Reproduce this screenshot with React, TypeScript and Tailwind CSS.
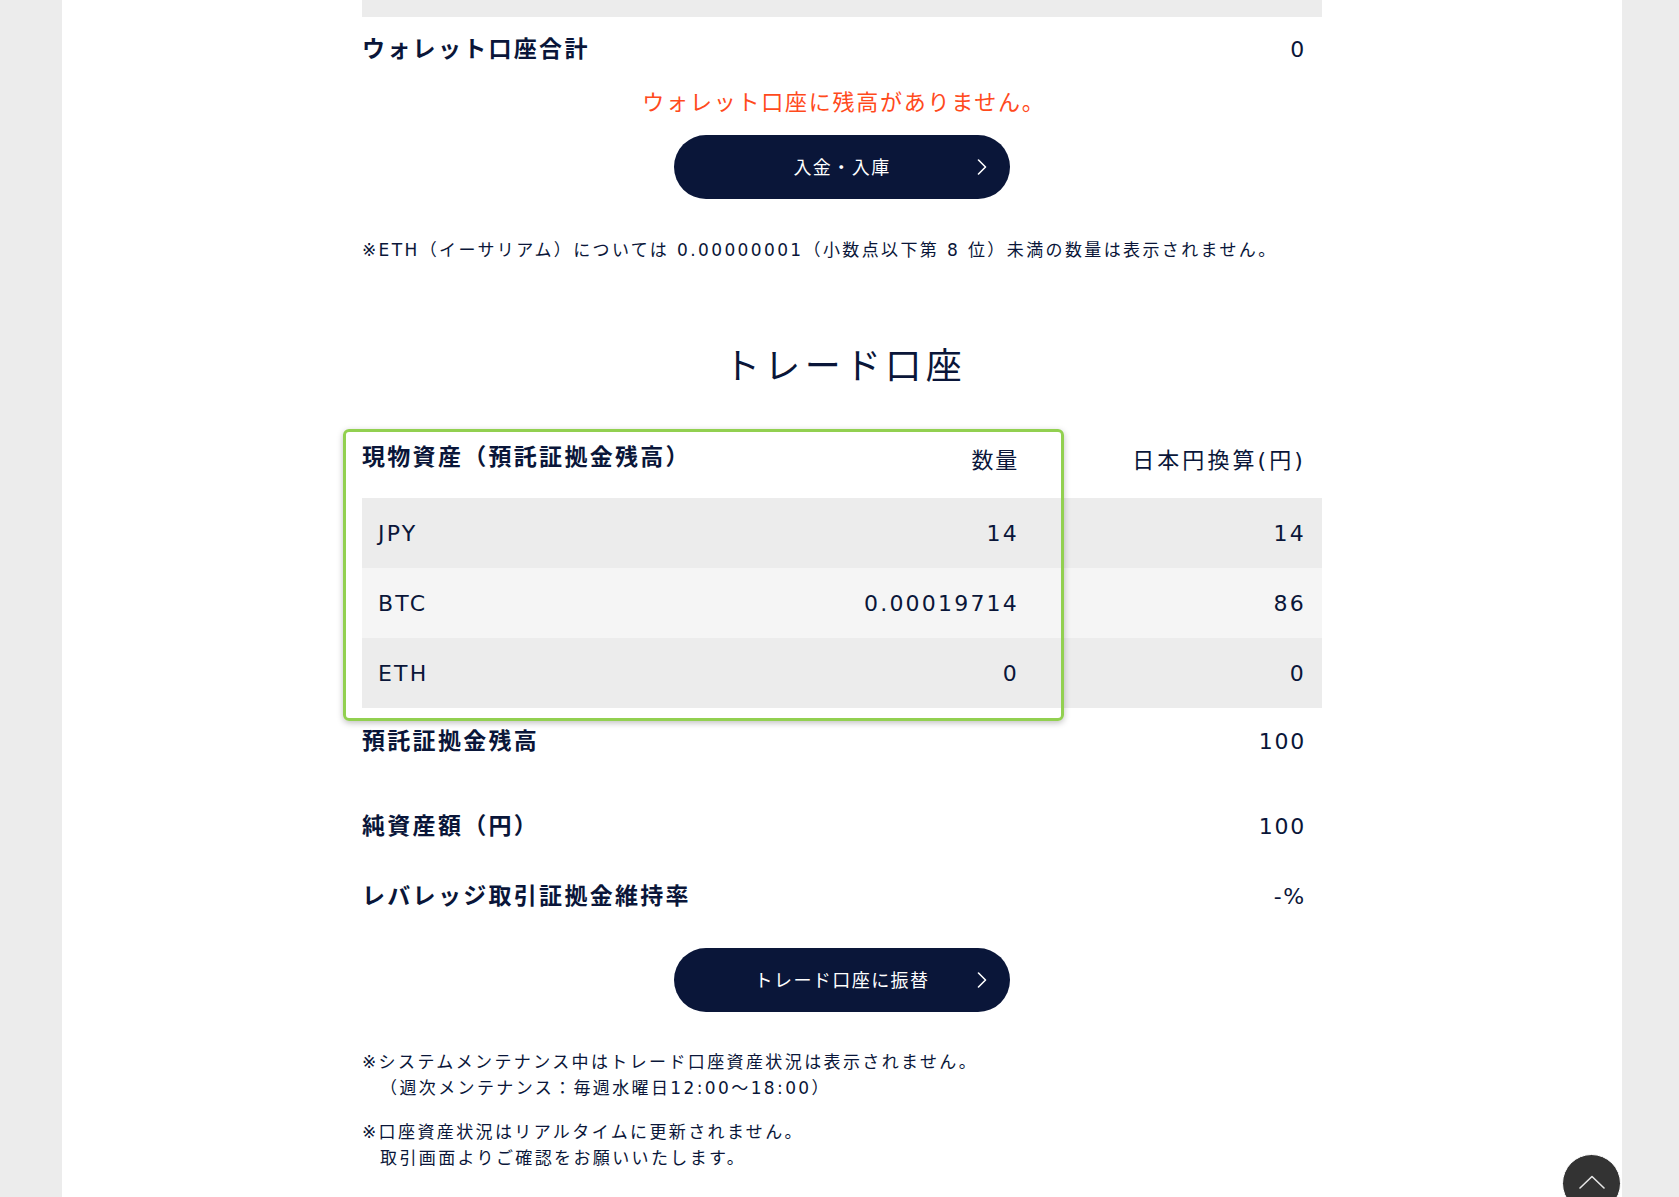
import React from 'react';

const navy = 'text-[#0a1639]';

function Chevron() {
  return (
    <svg width="10" height="16" viewBox="0 0 10 16" fill="none" className="absolute right-[23px] top-1/2 -translate-y-1/2">
      <polyline points="1.5,1 8.5,8 1.5,15" stroke="#ffffff" strokeWidth="1.6" strokeLinecap="round" strokeLinejoin="round" />
    </svg>
  );
}

function PillButton({ label }: { label: string }) {
  return (
    <button className="relative mx-auto flex h-[64px] w-[336px] items-center justify-center rounded-full bg-[#0a1639] text-[18px] tracking-[0.08em] text-white">
      {label}
      <Chevron />
    </button>
  );
}

function SummaryRow({ label, value, className }: { label: string; value: string; className?: string }) {
  return (
    <div className={`flex h-[66px] items-center justify-between pr-[16px] ${className ?? ''}`}>
      <span className="text-[23px] font-bold tracking-[0.1em]">{label}</span>
      <span className="text-[22px] tracking-[0.08em]">{value}</span>
    </div>
  );
}

const assets = [
  { code: 'JPY', qty: '14', jpy: '14', bg: 'bg-[#ececec]' },
  { code: 'BTC', qty: '0.00019714', jpy: '86', bg: 'bg-[#f5f5f5]' },
  { code: 'ETH', qty: '0', jpy: '0', bg: 'bg-[#ececec]' },
];

export default function App() {
  return (
    <div className={`min-h-screen bg-[#ececec] font-[DejaVu_Sans,Noto_Sans_CJK_JP,sans-serif] ${navy}`}>
      <div className="ml-[62px] w-[1560px] bg-white pb-[26px]">
        <div className="mx-auto w-[960px]">
          {/* tail of previous table */}
          <div className="h-[17px] bg-[#ececec]" />

          {/* wallet */}
          <div className="flex h-[64px] items-center justify-between pr-[16px]">
            <span className="text-[23px] font-bold tracking-[0.1em]">ウォレット口座合計</span>
            <span className="text-[22px] tracking-[0.08em]">0</span>
          </div>
          <p className="flex h-[42px] items-center justify-center pl-[4px] text-[22px] tracking-[0.08em] text-[#ff4a1c]">
            ウォレット口座に残高がありません。
          </p>
          <div className="mt-[12px]">
            <PillButton label="入金・入庫" />
          </div>
          <p className="mt-[38px] text-[17px] leading-[26px] tracking-[0.14em]">
            ※ETH（イーサリアム）については 0.00000001（小数点以下第 8 位）未満の数量は表示されません。
          </p>

          {/* trade account */}
          <h2 className="mt-[74px] flex h-[60px] items-center justify-center pl-[6px] text-[36px] font-normal tracking-[0.12em]">
            トレード口座
          </h2>

          <div className="relative mt-[33px]">
            <div className="flex h-[68px] items-start pt-[10px] text-[22px] leading-[34px] tracking-[0.08em]">
              <span className="flex-1 text-[23px] font-bold tracking-[0.1em]">現物資産（預託証拠金残高）</span>
              <span className="mt-[4px] text-right">数量</span>
              <span className="mt-[4px] w-[303px] pr-[16px] text-right tracking-[0.14em]">日本円換算(円)</span>
            </div>
            {assets.map((a) => (
              <div key={a.code} className={`flex h-[70px] items-center text-[22px] tracking-[0.1em] ${a.bg}`}>
                <span className="flex-1 pl-[16px]">{a.code}</span>
                <span className="text-right">{a.qty}</span>
                <span className="w-[303px] pr-[16px] text-right">{a.jpy}</span>
              </div>
            ))}
            {/* highlight frame */}
            <div className="pointer-events-none absolute -left-[19px] -top-[1px] h-[292px] w-[721px] rounded-[6px] border-[3px] border-[#92d050] shadow-[0_2px_6px_rgba(0,0,0,0.25)]" />
          </div>

          <SummaryRow label="預託証拠金残高" value="100" />
          <SummaryRow label="純資産額（円）" value="100" className="mt-[19px]" />
          <SummaryRow label="レバレッジ取引証拠金維持率" value="-%" className="mt-[4px]" />

          <div className="mt-[19px]">
            <PillButton label="トレード口座に振替" />
          </div>

          <div className="mt-[37px] text-[17px] leading-[26px] tracking-[0.14em]">
            <p>※システムメンテナンス中はトレード口座資産状況は表示されません。</p>
            <p className="pl-[18px]">（週次メンテナンス：毎週水曜日12:00〜18:00）</p>
          </div>
          <div className="mt-[18px] text-[17px] leading-[26px] tracking-[0.14em]">
            <p>※口座資産状況はリアルタイムに更新されません。</p>
            <p className="pl-[18px]">取引画面よりご確認をお願いいたします。</p>
          </div>
        </div>
      </div>

      <button
        aria-label="ページトップへ"
        className="fixed bottom-[-16px] right-[58px] flex h-[59px] w-[59px] items-center justify-center rounded-full border border-white bg-[#333333]"
      >
        <svg width="26" height="14" viewBox="0 0 26 14" fill="none" className="-mt-[4px]">
          <polyline points="1,13 13,1.5 25,13" stroke="#e6e6e6" strokeWidth="1.6" strokeLinecap="round" strokeLinejoin="round" />
        </svg>
      </button>
    </div>
  );
}
